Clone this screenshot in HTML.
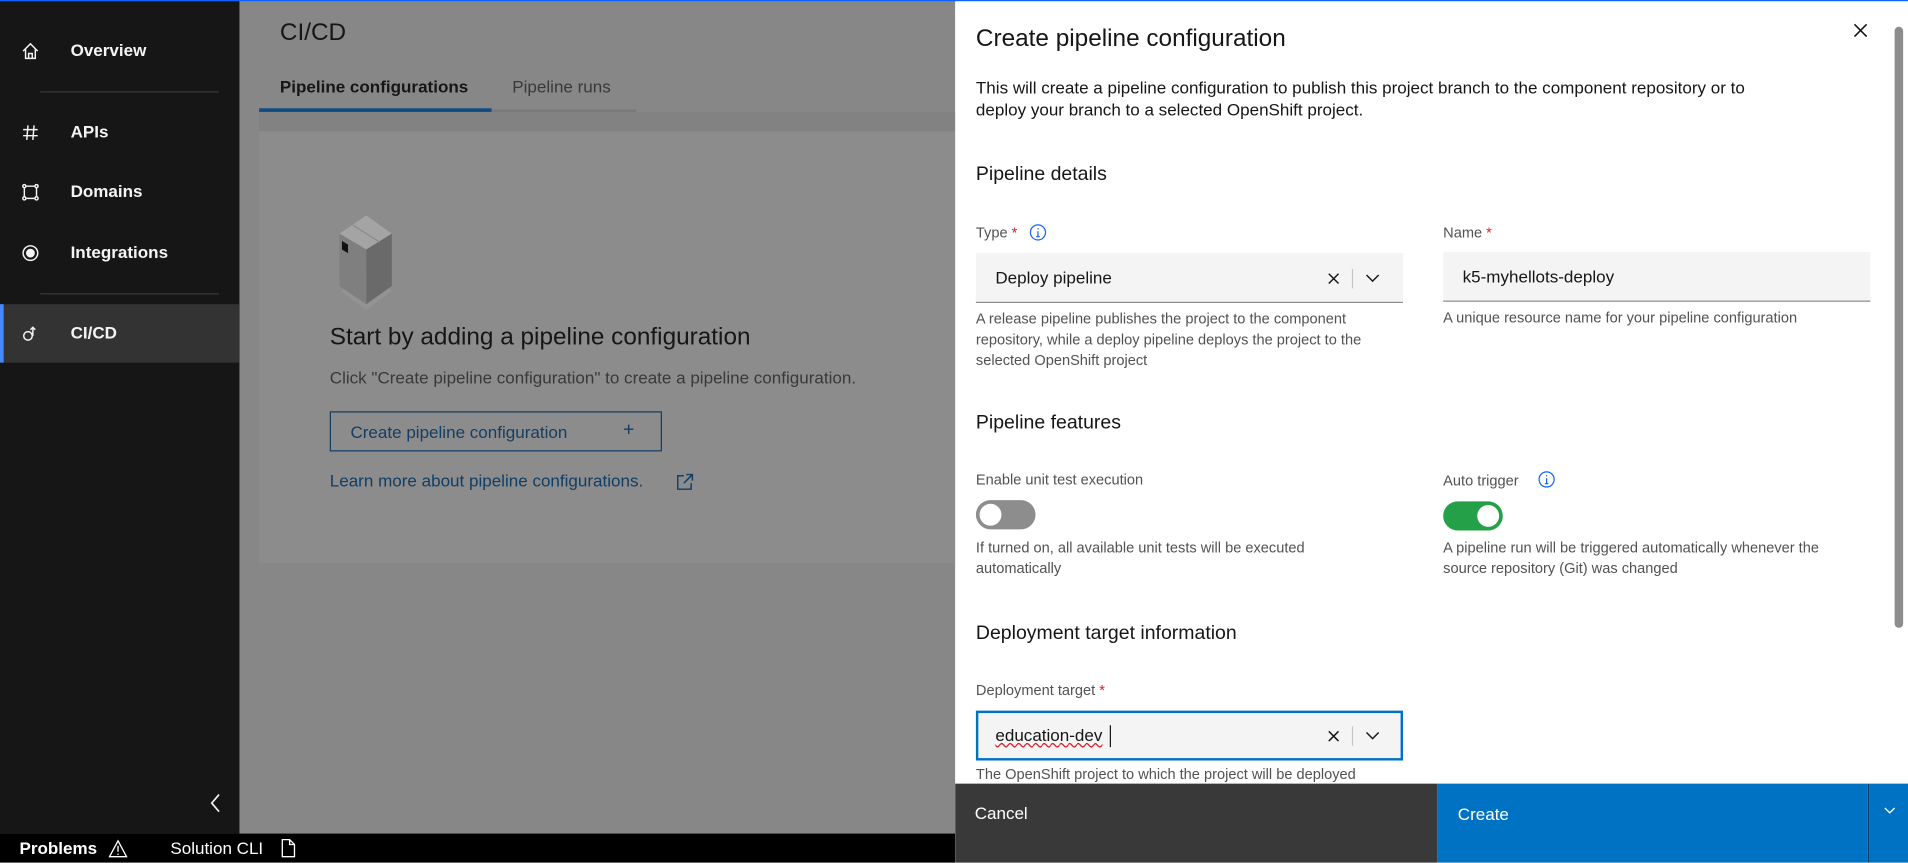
<!DOCTYPE html>
<html><head><meta charset="utf-8"><style>
*{box-sizing:border-box;margin:0;padding:0}
html,body{width:1908px;height:863px;overflow:hidden;background:#fff}
#w{position:absolute;left:0;top:0;width:1568px;height:709px;transform:scale(1.21684);transform-origin:0 0;font-family:"Liberation Sans",sans-serif;color:#161616;overflow:hidden}
.a{position:absolute;white-space:nowrap}
.side{position:absolute;left:0;top:0;width:197px;height:685px;background:#161616}
.nav{position:absolute;left:0;width:197px;height:48px;color:#f4f4f4;font-weight:bold;font-size:14px}
.nav span{position:absolute;left:58px;top:15px}
.nav svg{position:absolute;left:17px;top:16px}
.div{position:absolute;left:33px;width:147px;height:1px;background:#393939}
.main{position:absolute;left:197px;top:0;width:588px;height:685px;background:#878787}
.lbl{font-size:12px;color:#525252}
.help{font-size:12px;color:#525252;line-height:17px;white-space:normal}
.h{font-size:16px;color:#161616;font-weight:300}
.fld{position:absolute;height:41px;background:#f4f4f4;border-bottom:1px solid #8d8d8d}
</style></head><body><div id="w">
<div class="a" style="left:0;top:0;width:1568px;height:1px;background:#0f62fe;z-index:5"></div>
<div class="side">
 <div class="nav" style="top:18px"><svg width="16" height="16" viewBox="0 0 16 16" fill="none" stroke="#f4f4f4" stroke-width="1.2"><path d="M2 8 8 2l6 6M4 6.5V14h8V6.5M6.5 14V10h3v4"/></svg><span>Overview</span></div>
 <div class="div" style="top:75px"></div>
 <div class="nav" style="top:85px"><svg width="16" height="16" viewBox="0 0 16 16" fill="none" stroke="#f4f4f4" stroke-width="1.2"><path d="M6 2 5 14M11 2l-1 12M2 5.5h12M2 10.5h12"/></svg><span>APIs</span></div>
 <div class="nav" style="top:134px"><svg width="16" height="16" viewBox="0 0 16 16" fill="none" stroke="#f4f4f4" stroke-width="1.2"><path d="M4 3h8M4 13h8M3 4v8M13 4v8"/><circle cx="3" cy="3" r="1.3"/><circle cx="13" cy="3" r="1.3"/><circle cx="3" cy="13" r="1.3"/><circle cx="13" cy="13" r="1.3"/></svg><span>Domains</span></div>
 <div class="nav" style="top:184px"><svg width="16" height="16" viewBox="0 0 16 16" fill="none" stroke="#f4f4f4" stroke-width="1.2"><circle cx="8" cy="8" r="6"/><circle cx="8" cy="8" r="3" fill="#f4f4f4"/></svg><span>Integrations</span></div>
 <div class="div" style="top:241px"></div>
 <div class="nav" style="top:250px;background:#333;border-left:3px solid #4589ff"><svg width="16" height="16" viewBox="0 0 16 16" fill="none" stroke="#f4f4f4" stroke-width="1.2" style="left:14px"><circle cx="6" cy="10" r="3.5"/><path d="M10 10V3M8 5l2-2 2 2"/></svg><span style="left:55px">CI/CD</span></div>
 <svg class="a" style="left:170px;top:651px" width="14" height="18" viewBox="0 0 14 18" fill="none" stroke="#f4f4f4" stroke-width="1.4"><path d="M10 2 4 9l6 7"/></svg>
</div>
<div class="a" style="left:0;top:685px;width:785px;height:24px;background:#000;color:#fff;font-size:14px">
 <span class="a" style="left:16px;top:4px;font-weight:bold">Problems</span>
 <svg class="a" style="left:89px;top:5px" width="16" height="15" viewBox="0 0 16 15" fill="none" stroke="#fff" stroke-width="1.1"><path d="M8 1 1 14h14z M8 5v5M8 11.5v1"/></svg>
 <span class="a" style="left:140px;top:4px">Solution CLI</span>
 <svg class="a" style="left:230px;top:4px" width="14" height="16" viewBox="0 0 14 16" fill="none" stroke="#fff" stroke-width="1.1"><path d="M2 1h6l4 4v10H2z M8 1v4h4"/></svg>
</div>
<div class="main">
 <div class="a" style="left:33px;top:16px;font-size:20px;color:#161616;font-weight:300">CI/CD</div>
 <div class="a" style="left:33px;top:63px;font-size:14px;font-weight:bold;color:#161616">Pipeline configurations</div>
 <div class="a" style="left:224px;top:63px;font-size:14px;color:#393939">Pipeline runs</div>
 <div class="a" style="left:16px;top:89px;width:191px;height:3px;background:#0f4c81"></div>
 <div class="a" style="left:207px;top:90px;width:119px;height:2px;background:#7a7a7a"></div>
 <div class="a" style="left:16px;top:92px;width:572px;height:16px;background:#828282"></div>
 <div class="a" style="left:16px;top:108px;width:572px;height:355px;background:#8c8c8c"></div>
 <svg class="a" style="left:79px;top:165px" width="50" height="90" viewBox="0 0 50 90"><path d="M25 58 46 74 25 90 4 74z" fill="#939393"/><path d="M3 27 25 12 46 27 25 40z" fill="#a4a4a4"/><path d="M3 27 25 40v45L3 70z" fill="#7f7f7f"/><path d="M25 40 46 27v43L25 85z" fill="#6a6a6a"/><path d="M14 20 36 34" stroke="#8a8a8a" stroke-width="1"/><path d="M5 33l5 3v7l-5-3z" fill="#111"/></svg>
 <div class="a" style="left:74px;top:266px;font-size:20px;color:#161616">Start by adding a pipeline configuration</div>
 <div class="a" style="left:74px;top:302px;font-size:14px;color:#393939">Click "Create pipeline configuration" to create a pipeline configuration.</div>
 <div class="a" style="left:74px;top:338px;width:273px;height:33px;border:1px solid #0f3e66;font-size:14px;color:#163e63"><span class="a" style="left:16px;top:8px">Create pipeline configuration</span><span class="a" style="left:240px;top:6px;font-size:16px">+</span></div>
 <div class="a" style="left:74px;top:387px;font-size:14px;color:#0f3e66">Learn more about pipeline configurations.</div>
 <svg class="a" style="left:359px;top:389px" width="14" height="14" viewBox="0 0 14 14" fill="none" stroke="#0f3e66" stroke-width="1.2"><path d="M6 2H1v11h11V8M8 1h5v5M13 1 6 8"/></svg>
</div>
<div class="a" style="left:785px;top:0;width:783px;height:709px;background:#fff">
 <div class="a" style="left:17px;top:21px;font-size:20px">Create pipeline configuration</div>
 <svg class="a" style="left:738px;top:19px" width="12" height="12" viewBox="0 0 12 12" stroke="#161616" stroke-width="1.3"><path d="M1 1l10 10M11 1 1 11"/></svg>
 <div class="a" style="left:17px;top:63px;font-size:14px;line-height:18px;white-space:nowrap">This will create a pipeline configuration to publish this project branch to the component repository or to<br>deploy your branch to a selected OpenShift project.</div>
 <div class="a h" style="left:17px;top:135px">Pipeline details</div>
 <div class="a lbl" style="left:17px;top:184px">Type<span style="color:#da1e28"> *</span></div>
 <svg class="a" style="left:61px;top:184px" width="14" height="14" viewBox="0 0 14 14" fill="none" stroke="#0f62fe" stroke-width="1"><circle cx="7" cy="7" r="6.2"/><path d="M7 6v4.5M5.5 10.5h3M7 3.5v1"/></svg>
 <div class="fld" style="left:17px;top:208px;width:351px"><span class="a" style="left:16px;top:12px;font-size:14px">Deploy pipeline</span><svg class="a" style="left:289px;top:16px" width="10" height="10" viewBox="0 0 10 10" stroke="#161616" stroke-width="1.2"><path d="M1 1l8 8M9 1 1 9"/></svg><div class="a" style="left:309px;top:13px;width:1px;height:16px;background:#c6c6c6"></div><svg class="a" style="left:320px;top:17px" width="12" height="8" viewBox="0 0 12 8" fill="none" stroke="#161616" stroke-width="1.2"><path d="M1 1l5 5 5-5"/></svg></div>
 <div class="a help" style="left:17px;top:254px;width:351px">A release pipeline publishes the project to the component repository, while a deploy pipeline deploys the project to the selected OpenShift project</div>
 <div class="a lbl" style="left:401px;top:184px">Name<span style="color:#da1e28"> *</span></div>
 <div class="fld" style="left:401px;top:207px;width:351px"><span class="a" style="left:16px;top:12px;font-size:14px">k5-myhellots-deploy</span></div>
 <div class="a help" style="left:401px;top:253px">A unique resource name for your pipeline configuration</div>
 <div class="a h" style="left:17px;top:339px">Pipeline features</div>
 <div class="a lbl" style="left:17px;top:387px">Enable unit test execution</div>
 <div class="a" style="left:17px;top:411px;width:49px;height:24px;border-radius:12px;background:#8d8d8d"><div class="a" style="left:3px;top:3px;width:18px;height:18px;border-radius:9px;background:#fff"></div></div>
 <div class="a help" style="left:17px;top:442px;white-space:nowrap">If turned on, all available unit tests will be executed<br>automatically</div>
 <div class="a lbl" style="left:401px;top:388px">Auto trigger</div>
 <svg class="a" style="left:479px;top:387px" width="14" height="14" viewBox="0 0 14 14" fill="none" stroke="#0f62fe" stroke-width="1"><circle cx="7" cy="7" r="6.2"/><path d="M7 6v4.5M5.5 10.5h3M7 3.5v1"/></svg>
 <div class="a" style="left:401px;top:412px;width:49px;height:24px;border-radius:12px;background:#24a148"><div class="a" style="left:28px;top:3px;width:18px;height:18px;border-radius:9px;background:#fff"></div></div>
 <div class="a help" style="left:401px;top:442px;white-space:nowrap">A pipeline run will be triggered automatically whenever the<br>source repository (Git) was changed</div>
 <div class="a h" style="left:17px;top:512px">Deployment target information</div>
 <div class="a lbl" style="left:17px;top:560px">Deployment target<span style="color:#da1e28"> *</span></div>
 <div class="a" style="left:17px;top:584px;width:351px;height:41px;background:#f4f4f4;border:2px solid #0072c3"><span class="a" style="left:14px;top:10px;font-size:14px;text-decoration:underline wavy #da1e28;text-decoration-thickness:1px">education-dev</span><div class="a" style="left:108px;top:10px;width:1px;height:18px;background:#161616"></div><svg class="a" style="left:287px;top:14px" width="10" height="10" viewBox="0 0 10 10" stroke="#161616" stroke-width="1.2"><path d="M1 1l8 8M9 1 1 9"/></svg><div class="a" style="left:307px;top:11px;width:1px;height:16px;background:#c6c6c6"></div><svg class="a" style="left:318px;top:15px" width="12" height="8" viewBox="0 0 12 8" fill="none" stroke="#161616" stroke-width="1.2"><path d="M1 1l5 5 5-5"/></svg></div>
 <div class="a help" style="left:17px;top:628px">The OpenShift project to which the project will be deployed</div>
 <div class="a" style="left:772px;top:22px;width:7px;height:494px;border-radius:4px;background:#8d8d8d"></div>
 <div class="a" style="left:0;top:644px;width:396px;height:65px;background:#393939;color:#fff;font-size:14px"><span class="a" style="left:16px;top:16px">Cancel</span></div>
 <div class="a" style="left:396px;top:644px;width:354px;height:65px;background:#0072c3;color:#fff;font-size:14px"><span class="a" style="left:17px;top:17px">Create</span></div>
 <div class="a" style="left:750px;top:644px;width:1px;height:65px;background:#003a6d"></div>
 <div class="a" style="left:751px;top:644px;width:32px;height:65px;background:#0072c3"><svg class="a" style="left:12px;top:19px" width="10" height="7" viewBox="0 0 10 7" fill="none" stroke="#fff" stroke-width="1.1"><path d="M1 1l4 4 4-4"/></svg></div>
</div>
</div></body></html>
